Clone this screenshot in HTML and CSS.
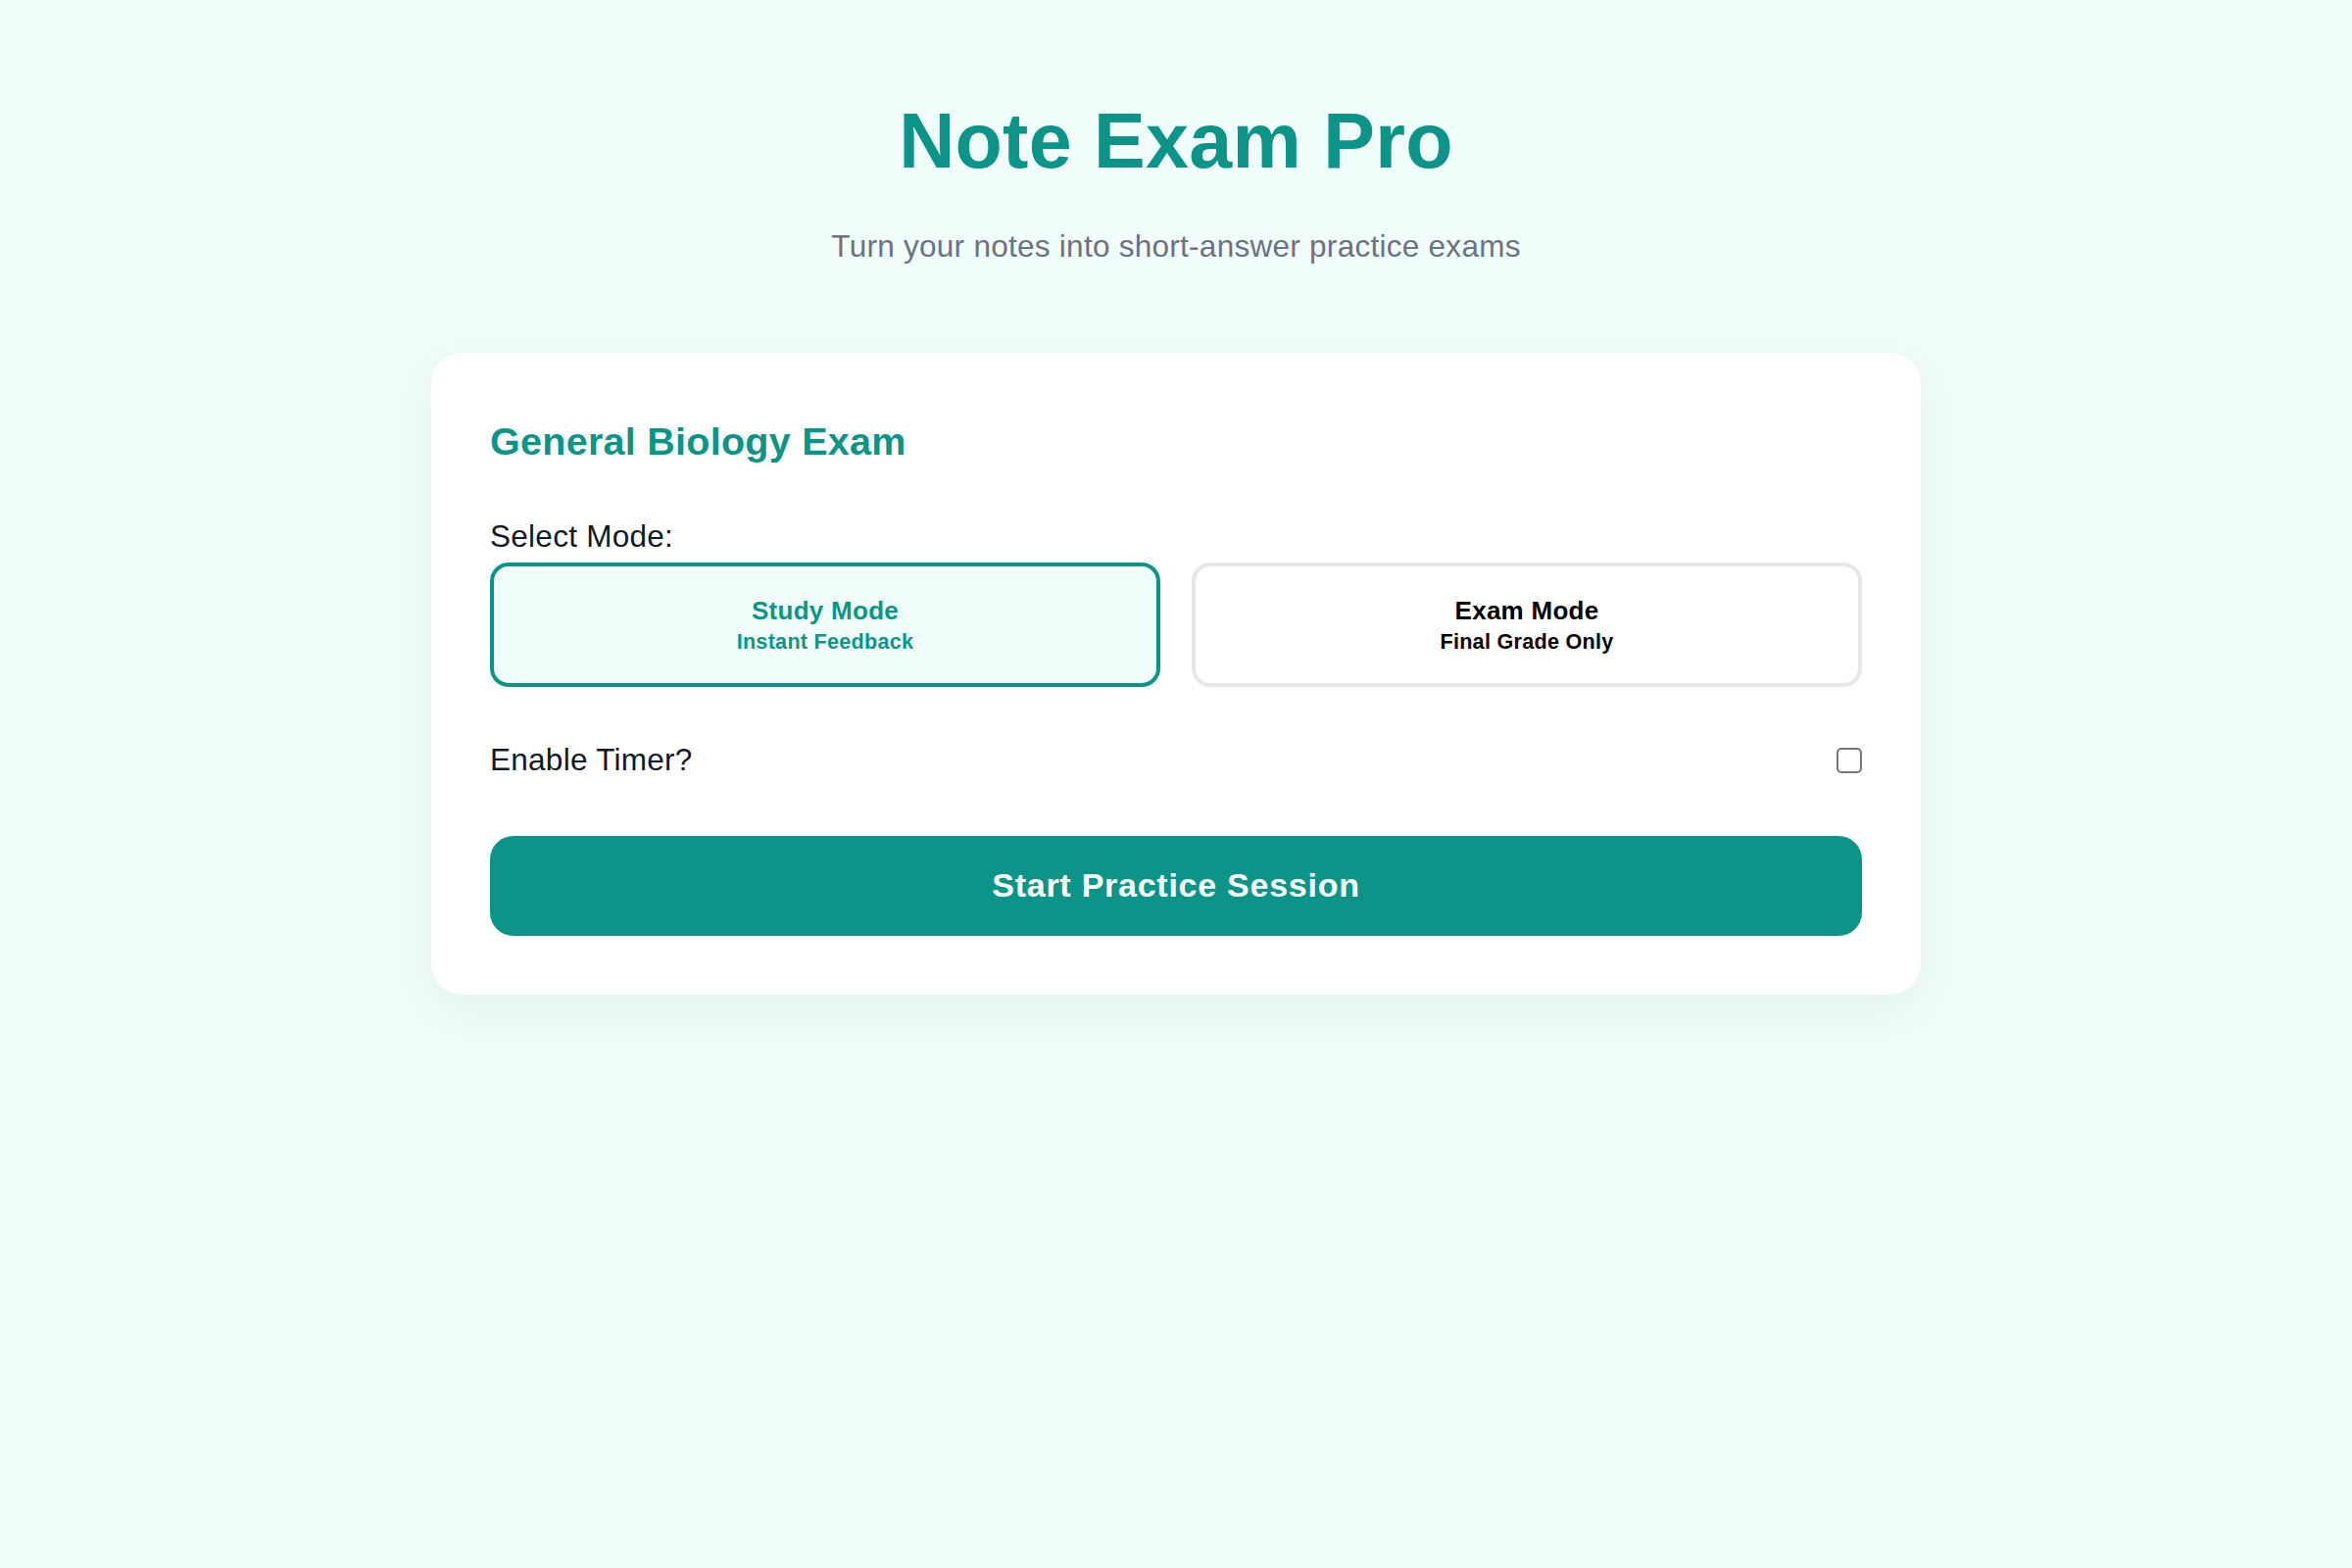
FILE: index.html
```html
<!DOCTYPE html>
<html lang="en">
<head>
<meta charset="utf-8">
<title>Note Exam Pro</title>
<link rel="stylesheet" href="styles.css">
</head>
<body>
<main class="page">
  <header class="hero">
    <h1 class="hero-title">Note Exam Pro</h1>
    <p class="hero-subtitle">Turn your notes into short-answer practice exams</p>
  </header>

  <section class="card">
    <h2 class="card-title">General Biology Exam</h2>

    <div class="field">
      <span class="field-label">Select Mode:</span>
      <div class="mode-grid">
        <button type="button" class="mode-option is-active">
          <span class="mode-name">Study Mode</span>
          <span class="mode-desc">Instant Feedback</span>
        </button>
        <button type="button" class="mode-option">
          <span class="mode-name">Exam Mode</span>
          <span class="mode-desc">Final Grade Only</span>
        </button>
      </div>
    </div>

    <div class="timer-row">
      <label class="timer-label" for="timer">Enable Timer?</label>
      <input type="checkbox" id="timer" class="timer-check">
    </div>

    <button type="button" class="start-btn">Start Practice Session</button>
  </section>
</main>
</body>
</html>
```

FILE: styles.css
```css
* {
  box-sizing: border-box;
}

html,
body {
  margin: 0;
  padding: 0;
}

body {
  background: #f0fdfa;
  font-family: "Liberation Sans", Arial, Helvetica, sans-serif;
  letter-spacing: 0.017em;
  color: #111827;
  min-height: 1600px;
}

.page {
  padding-top: 97px;
}

.hero {
  text-align: center;
}

.hero-title {
  margin: 0;
  font-size: 79px;
  line-height: 94px;
  font-weight: 700;
  color: #0d9488;
}

.hero-subtitle {
  margin: 40px 0 0;
  font-size: 31.5px;
  line-height: 40px;
  color: #6b7280;
}

.card {
  width: 1520px;
  margin: 89px auto 0;
  padding: 60px;
  background: #ffffff;
  border-radius: 32px;
  box-shadow: 0 16px 48px rgba(0, 0, 0, 0.055);
}

.card-title {
  margin: 0;
  font-size: 39.5px;
  line-height: 61px;
  font-weight: 700;
  color: #0d9488;
}

.field {
  margin-top: 46px;
}

.field-label {
  display: block;
  font-size: 31.5px;
  line-height: 40px;
  color: #111827;
}

.mode-grid {
  margin-top: 7px;
  display: grid;
  grid-template-columns: 1fr 1fr;
  gap: 32px;
}

.mode-option {
  display: flex;
  flex-direction: column;
  align-items: center;
  padding: 28px 16px;
  border: 4px solid #e5e7eb;
  border-radius: 19px;
  background: #ffffff;
  color: #000000;
  font-family: inherit;
  letter-spacing: inherit;
  font-weight: 700;
  cursor: pointer;
}

.mode-option.is-active {
  border-color: #0d9488;
  background: #f0fdfa;
  color: #0d9488;
}

.mode-name {
  font-size: 26px;
  line-height: 34px;
}

.mode-desc {
  font-size: 21.6px;
  line-height: 29px;
}

.timer-row {
  margin-top: 54px;
  display: flex;
  align-items: center;
  justify-content: space-between;
  height: 40px;
}

.timer-label {
  font-size: 31.5px;
  line-height: 40px;
  color: #111827;
}

.timer-check {
  appearance: none;
  -webkit-appearance: none;
  margin: 2px 0 0;
  width: 26px;
  height: 26px;
  border: 2px solid #767676;
  border-radius: 5px;
  background: #ffffff;
}

.start-btn {
  display: block;
  width: 100%;
  margin-top: 58px;
  padding: 30px 16px 32px;
  border: none;
  border-radius: 24px;
  background: #0d9488;
  color: #ffffff;
  font-family: inherit;
  letter-spacing: 0.022em;
  font-size: 34px;
  line-height: 40px;
  font-weight: 700;
  cursor: pointer;
}
```
